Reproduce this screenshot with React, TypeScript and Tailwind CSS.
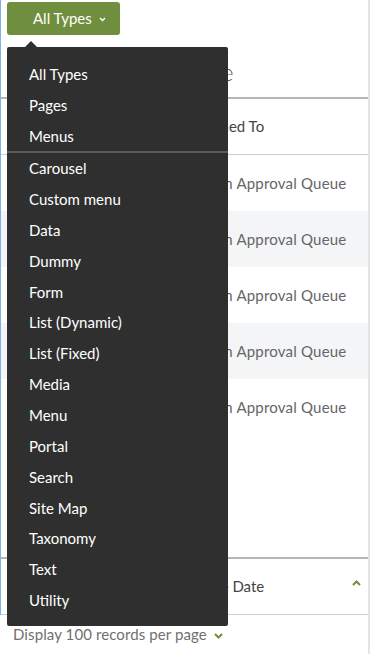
import React from "react";

const items1 = ["All Types", "Pages", "Menus"];
const items2 = [
  "Carousel",
  "Custom menu",
  "Data",
  "Dummy",
  "Form",
  "List (Dynamic)",
  "List (Fixed)",
  "Media",
  "Menu",
  "Portal",
  "Search",
  "Site Map",
  "Taxonomy",
  "Text",
  "Utility",
];

const rows = [0, 1, 2, 3, 4];

export default function App() {
  return (
    <div
      className="relative w-[370px] h-[654px] overflow-hidden bg-white flex"
      style={{ fontFamily: "Lato, 'Open Sans', sans-serif" }}
    >
      <div className="flex-1 flex flex-col min-w-0">
        <div className="flex flex-col border-l border-[#7fb0e6] h-[615px]">
          {/* toolbar */}
          <div className="h-[47px] pt-[2px] pl-[6px]">
            <button className="h-[33px] w-[113px] rounded-[3px] bg-[#6f8f3e] text-white text-[15px] flex items-center pl-[26px] gap-[7px]">
              <span>All Types</span>
              <svg width="7" height="5" viewBox="0 0 7 5" className="mt-[1px]">
                <path d="M1 1 L3.5 3.5 L6 1" fill="none" stroke="white" strokeWidth="1.4" />
              </svg>
            </button>
          </div>
          {/* heading */}
          <div className="h-[50px] flex items-center pl-[64px] text-[24px] text-[#5a5a5a] font-light">
            Approval Queue
          </div>
          {/* header row */}
          <div className="h-[58px] border-t-2 border-b border-t-[#b6b6b6] border-b-[#cfcfcf] flex items-center text-[15px] text-[#444]">
            <div className="w-[185px] pl-[20px]">Title</div>
            <div>Assigned To</div>
          </div>
          {rows.map((r) => (
            <div
              key={r}
              className={`h-[56px] flex items-center text-[15px] text-[#666] ${r % 2 === 1 ? "bg-[#f4f5f7]" : "bg-white"}`}
            >
              <div className="w-[219px] pl-[20px]">Item</div>
              <div className="tracking-[0.2px]">In Approval Queue</div>
            </div>
          ))}
          <div className="flex-1" />
          <div className="h-[58px] border-t-2 border-b border-t-[#b6b6b6] border-b-[#cfcfcf] flex items-center text-[15px] text-[#444]">
            <div className="w-[200px] pl-[20px]">Status</div>
            <div className="flex-1">Due Date</div>
            <svg width="9" height="6" viewBox="0 0 9 6" className="mr-[7px] mb-[8px]">
              <path d="M1 5 L4.5 1.5 L8 5" fill="none" stroke="#6f8f3e" strokeWidth="2" />
            </svg>
          </div>
        </div>
        <div className="flex-1 flex items-center pl-[13px] text-[15px] text-[#707070] gap-[7px]">
          <span className="tracking-[0.1px]">Display 100 records per page</span>
          <svg width="9" height="6" viewBox="0 0 9 6" className="mt-[2px]">
            <path d="M1 1 L4.5 4.5 L8 1" fill="none" stroke="#6f8f3e" strokeWidth="2" />
          </svg>
        </div>
      </div>
      <div className="w-[2px] bg-[#e4e4e4]" />

      {/* dropdown */}
      <div className="absolute left-[7px] top-[47px] w-[221px] h-[579px] bg-[#2f2f2f] rounded-[2px] pt-[12px] text-[15px] text-white">
        <div className="absolute left-[18px] top-[-6px] w-0 h-0 border-l-[6px] border-r-[6px] border-b-[6px] border-l-transparent border-r-transparent border-b-[#2f2f2f]" />
        {items1.map((t) => (
          <div key={t} className="h-[31px] flex items-center pl-[22px]">
            {t}
          </div>
        ))}
        <div className="h-[2px] bg-[#5a5a5a] mt-[-1px]" />
        {items2.map((t) => (
          <div key={t} className="h-[30.86px] flex items-center pl-[22px]">
            {t}
          </div>
        ))}
      </div>
    </div>
  );
}
